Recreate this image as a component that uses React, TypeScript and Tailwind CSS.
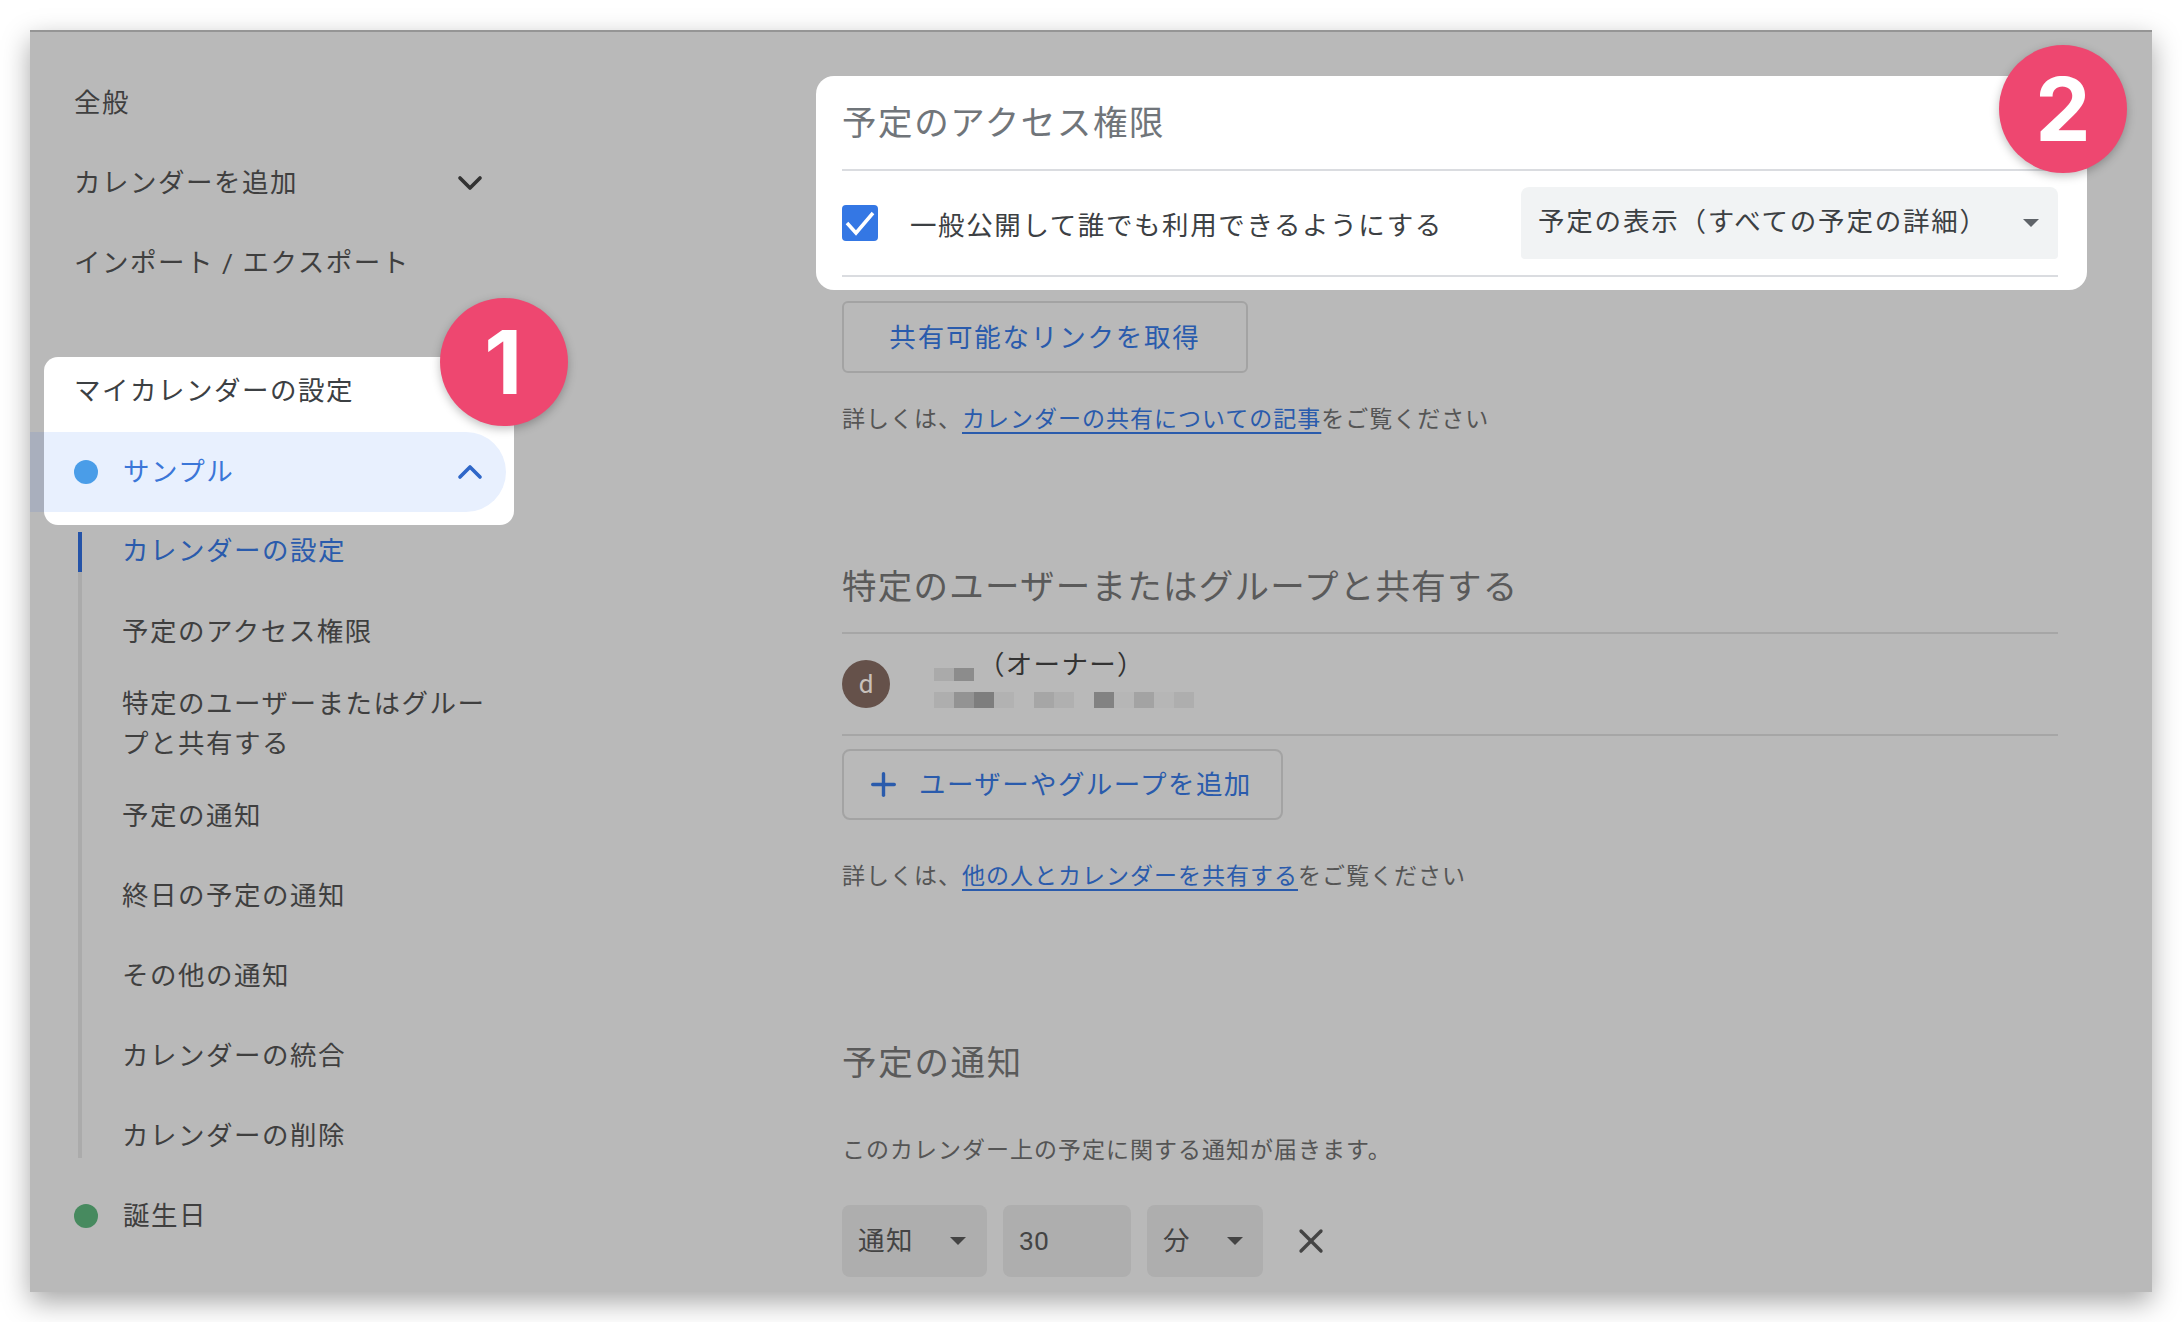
import { ChevronDown, ChevronUp, Plus, X } from 'lucide-react'

const subItems = ['予定の通知', '終日の予定の通知', 'その他の通知', 'カレンダーの統合']

// mosaic that hides the owner's address
const mailBlocks = [
  'bg-[#aeaeae]', 'bg-[#939393]', 'bg-[#7e7e7e]', 'bg-[#b2b2b2]', '',
  'bg-[#a6a6a6]', 'bg-[#b0b0b0]', '', 'bg-[#828282]', 'bg-[#b6b6b6]', 'bg-[#a3a3a3]', 'bg-[#b6b6b6]', 'bg-[#aeaeae]',
]

function Badge({ n, className }: { n: string, className: string }) {
  return (
    <div className={`absolute z-20 flex h-[128px] w-[128px] items-center justify-center rounded-full bg-[#ee4770] font-['Inter',sans-serif] text-[88px] font-bold leading-none text-white shadow-[0_3px_10px_rgba(0,0,0,0.25)] ${className}`}>
      {n}
    </div>
  )
}

function Arrow({ className = '' }: { className?: string }) {
  return <span className={`h-0 w-0 border-x-[8px] border-t-[8px] border-x-transparent ${className}`} />
}

function NavRow({ label, children }: { label: string, children?: React.ReactNode }) {
  return (
    <div className="flex h-[80px] w-[460px] items-center justify-between pl-[44px]">
      <span>{label}</span>
      {children}
    </div>
  )
}

function Sidebar() {
  return (
    <aside className="w-[510px] shrink-0 pt-[31px] text-[26.5px] tracking-[1.5px] text-[#3f3f3f]">
      <NavRow label="全般" />
      <NavRow label="カレンダーを追加">
        <ChevronDown size={40} strokeWidth={2.2} className="text-[#333333]" />
      </NavRow>
      <NavRow label="インポート / エクスポート" />

      {/* highlighted block */}
      <div className="relative mt-[54px]">
        <div className="absolute left-0 top-[75px] h-[80px] w-[20px] bg-[#a9afbd]" />
        <div className="relative ml-[14px] h-[168px] w-[470px] rounded-[14px] bg-white text-[#3c4043]">
          <div className="flex h-[75px] items-center pb-[8px] pl-[30px]">マイカレンダーの設定</div>
          <div className="flex h-[80px] w-[462px] items-center rounded-r-full bg-[#e8f0fe] pl-[30px] pr-[16px] text-[#3b76d8]">
            <span className="h-[24px] w-[24px] rounded-full bg-[#4a9de8]" />
            <span className="ml-[25px] flex-1">サンプル</span>
            <ChevronUp size={40} strokeWidth={2.2} className="text-[#2f67c8]" />
          </div>
          <Badge n="1" className="left-[396px] top-[-59px]" />
        </div>
      </div>

      <div className="ml-[48px] mt-[7px] flex flex-col border-l-[4px] border-[#ababab]">
        <div className="relative mt-[-20px] flex h-[80px] items-center pb-[2px] pl-[40px] text-[#2a5bac]">
          <span className="absolute left-[-4px] top-[20px] h-[40px] w-[4px] bg-[#2453a8]" />
          カレンダーの設定
        </div>
        <div className="flex h-[80px] items-center pl-[40px]">予定のアクセス権限</div>
        <div className="flex h-[104px] items-center pl-[40px]">
          <span className="w-[372px] leading-[40px]">特定のユーザーまたはグループと共有する</span>
        </div>
        {subItems.map((item) => (
          <div key={item} className="flex h-[80px] items-center pl-[40px]">{item}</div>
        ))}
        <div className="mb-[-18px] flex h-[80px] items-center pl-[40px]">カレンダーの削除</div>
      </div>

      <div className="mt-[18px] flex h-[80px] items-center pl-[44px]">
        <span className="h-[24px] w-[24px] rounded-full bg-[#478a5f]" />
        <span className="ml-[25px]">誕生日</span>
      </div>
    </aside>
  )
}

function Help({ before, link, after }: { before: string, link: string, after: string }) {
  return (
    <p className="h-[40px] pt-[1px] text-[23px] leading-[40px] tracking-[1px] text-[#555555]">
      {before}
      <a className="text-[#2a5bac] underline decoration-2 underline-offset-[5px]">{link}</a>
      {after}
    </p>
  )
}

function Main() {
  return (
    <main className="ml-[302px] mr-[94px] w-[1216px] pt-[44px]">
      {/* highlighted block */}
      <div className="relative -ml-[26px] -mr-[29px] h-[214px] rounded-[18px] bg-white pl-[26px] pr-[29px]">
        <h2 className="flex h-[93px] items-center pt-[2px] text-[34.5px] font-normal tracking-[1.6px] text-[#70757a]">予定のアクセス権限</h2>
        <div className="h-[2px] bg-[#dadce0]" />
        <div className="flex h-[104px] items-center text-[26.5px] tracking-[1.6px] text-[#3c4043]">
          <span className="h-[36px] w-[36px] shrink-0 rounded-[4px] bg-[#3477e4]">
            <svg viewBox="0 0 36 36" className="h-[36px] w-[36px]" fill="none" stroke="white" strokeWidth="3.5">
              <polyline points="5,18 14,28 31,8" />
            </svg>
          </span>
          <span className="ml-[32px] flex-1 pt-[5px]">一般公開して誰でも利用できるようにする</span>
          <div className="flex h-[72px] w-[537px] items-center justify-between rounded-t-[8px] rounded-b-[4px] bg-[#f1f3f4] pl-[17px] pr-[19px] tracking-[1.8px]">
            <span className="pb-[2px]">予定の表示（すべての予定の詳細）</span>
            <Arrow className="border-t-[#5f6368]" />
          </div>
        </div>
        <div className="h-[2px] bg-[#dadce0]" />
        <Badge n="2" className="left-[1183px] top-[-31px]" />
      </div>

      <button className="mt-[11px] flex h-[72px] w-[406px] items-center justify-center rounded-[6px] border-2 border-[#a3a3a3] pt-[2px] text-[26.5px] tracking-[1.8px] text-[#2a5bac]">
        共有可能なリンクを取得
      </button>
      <div className="mt-[26px]">
        <Help before="詳しくは、" link="カレンダーの共有についての記事" after="をご覧ください" />
      </div>

      <h2 className="mt-[118px] flex h-[60px] items-center pt-[2px] text-[34.5px] font-normal tracking-[1.25px] text-[#5a5a5a]">特定のユーザーまたはグループと共有する</h2>
      <div className="mt-[15px] h-[2px] bg-[#a6a6a6]" />
      <div className="flex h-[100px]">
        <div className="flex h-[48px] w-[48px] shrink-0 items-center justify-center self-center rounded-full bg-[#65514a] text-[26px] text-[#c8c0bb]">d</div>
        <div className="ml-[44px] pt-[12px]">
          <div className="flex h-[35px]">
            <span className="h-[13px] w-[20px] self-end bg-[#aaaaaa]" />
            <span className="h-[13px] w-[20px] self-end bg-[#8c8c8c]" />
            <span className="ml-[4px] pt-[1px] text-[26.5px] leading-[36px] tracking-[1.3px] text-[#333333]">（オーナー）</span>
          </div>
          <div className="mt-[11px] flex">
            {mailBlocks.map((color, i) => (
              <span key={i} className={`h-[16px] w-[20px] ${color}`} />
            ))}
          </div>
        </div>
      </div>
      <div className="h-[2px] bg-[#a6a6a6]" />

      <button className="mt-[13px] flex h-[71px] w-[441px] items-center rounded-[8px] border-2 border-[#a3a3a3] pl-[21px] text-[26.5px] tracking-[1.4px] text-[#2a5bac]">
        <Plus size={37} strokeWidth={2.2} />
        <span className="ml-[17px]">ユーザーやグループを追加</span>
      </button>
      <div className="mt-[36px]">
        <Help before="詳しくは、" link="他の人とカレンダーを共有する" after="をご覧ください" />
      </div>

      <h2 className="mt-[137px] flex h-[60px] items-center pt-[2px] text-[34.5px] font-normal tracking-[1.7px] text-[#5a5a5a]">予定の通知</h2>
      <p className="mt-[38px] h-[40px] text-[23px] leading-[40px] tracking-[1px] text-[#555555]">このカレンダー上の予定に関する通知が届きます。</p>

      <div className="mt-[34px] flex items-center text-[26.5px] text-[#444444]">
        <div className="flex h-[72px] w-[145px] items-center justify-between rounded-[8px] bg-[#aeaeae] pl-[16px] pr-[21px]">
          <span className="tracking-[1.5px]">通知</span>
          <Arrow className="border-t-[#444444]" />
        </div>
        <div className="ml-[16px] flex h-[72px] w-[128px] items-center rounded-[8px] bg-[#aeaeae] pl-[16px]">30</div>
        <div className="ml-[16px] flex h-[72px] w-[116px] items-center justify-between rounded-[8px] bg-[#aeaeae] pl-[16px] pr-[20px]">
          <span>分</span>
          <Arrow className="border-t-[#444444]" />
        </div>
        <X size={40} strokeWidth={2} className="ml-[28px] text-[#444444]" />
      </div>
    </main>
  )
}

export default function App() {
  return (
    <div className="h-[1322px] w-[2182px] overflow-hidden bg-white pl-[30px] pt-[30px] font-['Roboto','Noto_Sans_CJK_JP',sans-serif]">
      <div className="flex h-[1262px] w-[2122px] overflow-hidden border-t-[2px] border-[#959595] bg-[#b9b9b9] shadow-[0_10px_26px_rgba(0,0,0,0.35)]">
        <Sidebar />
        <Main />
      </div>
    </div>
  )
}
